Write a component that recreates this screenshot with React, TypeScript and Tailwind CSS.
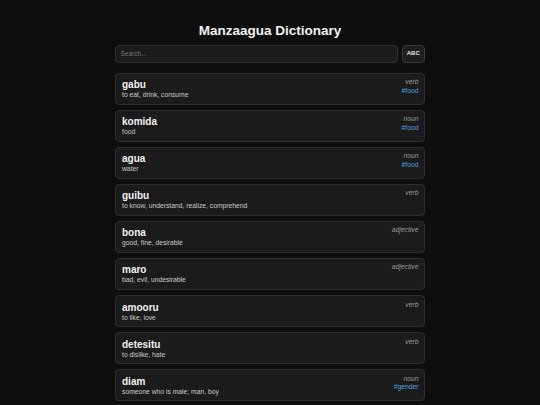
import { useState } from "react";

interface Entry {
    word: string;
    definition: string;
    pos: string;
    tags?: string[];
}

const entries: Entry[] = [
    { word: "gabu", definition: "to eat, drink, consume", pos: "verb", tags: ["food"] },
    { word: "komida", definition: "food", pos: "noun", tags: ["food"] },
    { word: "agua", definition: "water", pos: "noun", tags: ["food"] },
    { word: "guibu", definition: "to know, understand, realize, comprehend", pos: "verb" },
    { word: "bona", definition: "good, fine, desirable", pos: "adjective" },
    { word: "maro", definition: "bad, evil, undesirable", pos: "adjective" },
    { word: "amooru", definition: "to like, love", pos: "verb" },
    { word: "detesitu", definition: "to dislike, hate", pos: "verb" },
    { word: "diam", definition: "someone who is male; man, boy", pos: "noun", tags: ["gender"] },
];

function EntryCard({ entry }: { entry: Entry }) {
    return (
        <div className="flex justify-between rounded-[4px] border border-[#2e2e2e] bg-[#1b1b1b] pl-[6px] pr-[5.5px] pt-[5.5px] pb-[4.5px]">
            <div>
                <div className="text-[10px] font-bold leading-[12px] text-[#f2f2f2]">{entry.word}</div>
                <div className="text-[6.75px] leading-[8px] text-[#c9c9c9]">{entry.definition}</div>
            </div>
            <div className="-mt-[1px] flex flex-col items-end">
                <span className="text-[6.75px] italic leading-[8.5px] text-[#9a9a9a]">{entry.pos}</span>
                {entry.tags?.map((t) => (
                    <span key={t} className="text-[6.75px] leading-[8.5px] text-[#4ea1e0]">
                        #{t}
                    </span>
                ))}
            </div>
        </div>
    );
}

export default function App() {
    const [query, setQuery] = useState("");

    const filtered = entries.filter(
        (e) =>
            e.word.toLowerCase().includes(query.toLowerCase()) ||
            e.definition.toLowerCase().includes(query.toLowerCase())
    );

    return (
        <div
            className="h-[405px] overflow-hidden bg-[#0e0e0e]"
            style={{ fontFamily: '"Liberation Sans", Arial, sans-serif' }}
        >
            <div className="mx-auto w-[310px] pt-[22.5px]">
                <h1 className="mb-[6.5px] text-center text-[13.5px] font-bold leading-[16px] text-[#f2f2f2]">
                    Manzaagua Dictionary
                </h1>

                <div className="flex gap-[4px]">
                    <input
                        value={query}
                        onChange={(e) => setQuery(e.target.value)}
                        placeholder="Search..."
                        className="h-[17.5px] flex-1 rounded-[4px] border border-[#2e2e2e] bg-[#1b1b1b] px-[4.5px] text-[6.5px] text-[#e5e5e5] outline-none placeholder:text-[#767676]"
                    />
                    <button className="h-[17.5px] w-[23.5px] rounded-[4px] border border-[#3a3a3a] bg-[#1e1e1e] text-[6px] font-bold text-[#e5e5e5]">
                        ABC
                    </button>
                </div>

                <div className="mt-[10px] flex flex-col gap-[5.1px]">
                    {filtered.map((e) => (
                        <EntryCard key={e.word} entry={e} />
                    ))}
                </div>
            </div>
        </div>
    );
}
